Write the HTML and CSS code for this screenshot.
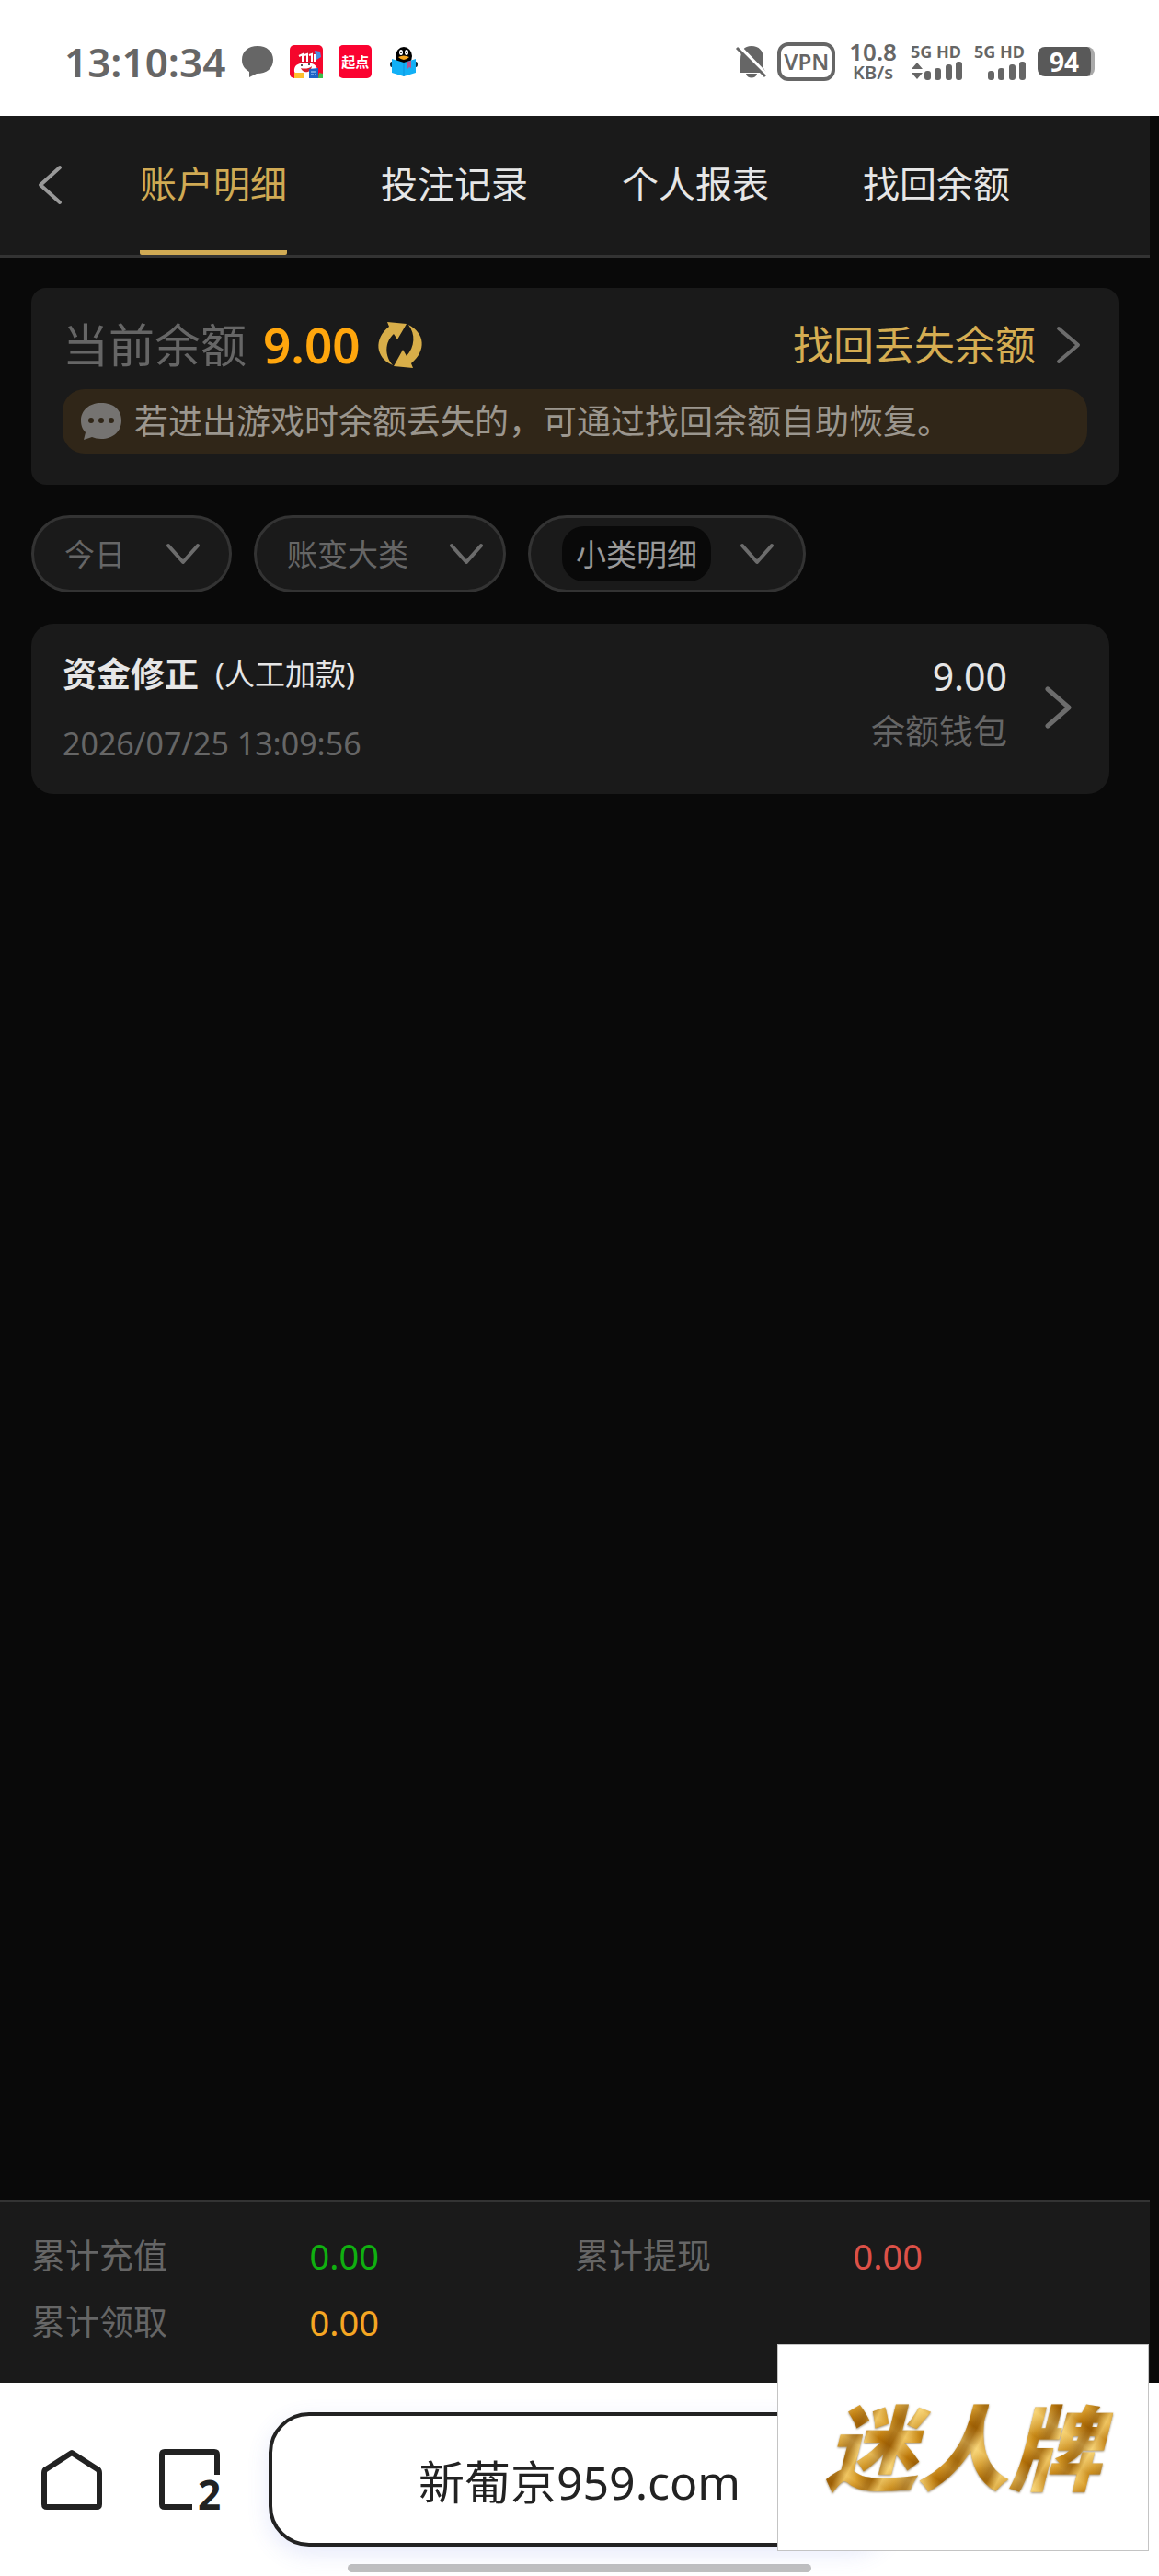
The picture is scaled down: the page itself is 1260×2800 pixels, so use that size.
FILE: index.html
```html
<!DOCTYPE html>
<html lang="zh-CN">
<head>
    <meta charset="UTF-8">
    <meta name="viewport" content="width=device-width, initial-scale=1.0">
    <title>账户明细</title>
    <link rel="stylesheet" href="styles.css">
</head>
<body>
    <!-- Phone status bar -->
    <div class="status-bar">
        <div class="status-left">
            <span class="clock">13:10:34</span>
            <svg width="36" height="36" viewBox="0 0 36 36"><path d="M18 1C8 1 1 7 1 16c0 6 3 10 8 13v6l8-4c11 0 18-6 18-15S28 1 18 1z" fill="#666"/></svg>
            <svg width="36" height="36" viewBox="0 0 36 36">
                <rect width="36" height="36" rx="5" fill="#f5062c"/>
                <path d="M10 9c1-5 15-6 17 0v10H10z" fill="#e0102c"/>
                <path d="M27 6l6 1 1 6-5 3z" fill="#4a8fe0"/>
                <path d="M10 12l4-2v8m2-7l3-1v8m2-7l3-1v8M27 10v8" stroke="#fff" stroke-width="2" fill="none"/>
                <path d="M5 29c-1-8 6-10 12-9 8-2 13 2 13 8l-3 8H9z" fill="#fff"/>
                <path d="M12 25c3 1 9 1 12-2-1 7-9 9-12 2z" fill="#d7222e"/>
                <circle cx="13" cy="22" r="1" fill="#222"/><circle cx="21" cy="21" r="1" fill="#222"/>
                <path d="M5 30h11v6H5z" fill="#ffc02e"/>
                <path d="M21 26l10-1v11H21z" fill="#1d62c5"/>
                <path d="M23 29h6m-6 3h3m1 0h2" stroke="#bfe0ff" stroke-width="1"/>
                <path d="M32 30l4 1v5h-5z" fill="#3bbf4a"/>
            </svg>
            <span class="app-qidian">起点</span>
            <svg width="36" height="36" viewBox="0 0 36 36">
                <ellipse cx="18" cy="12" rx="9" ry="10" fill="#000"/>
                <ellipse cx="5" cy="21" rx="2" ry="3" fill="#0a2a3c"/><ellipse cx="31" cy="21" rx="2" ry="3" fill="#0a2a3c"/>
                <ellipse cx="15" cy="8" rx="2" ry="3" fill="#fff"/><ellipse cx="21" cy="8" rx="2" ry="3" fill="#fff"/>
                <circle cx="15" cy="8" r="1"/><circle cx="21" cy="8" r="1"/>
                <path d="M12 13q6-3 12 0-6 6-12 0z" fill="#f6a51b"/>
                <path d="M5 15l13 4 13-4v15l-13 4-13-4z" fill="#12b0f6"/>
                <path d="M18 19v15" stroke="#0c93dc" stroke-width="1"/>
                <path d="M22 18l4-1v8l-2-1-2 2z" fill="#b7548c"/>
            </svg>
        </div>
        <div class="status-right">
            <svg width="34" height="38" viewBox="0 0 34 38">
                <path d="M5 31V17C5 7 9 2 17 2s13 5 13 14v10l3 5zM11 32h12c-1 6-11 6-12 0z" fill="#666"/>
                <path d="M3 2l32 33" stroke="#fff" stroke-width="4"/>
                <path d="M1 4l31 31" stroke="#666" stroke-width="3"/>
            </svg>
            <span class="vpn">VPN</span>
            <span class="speed"><b>10.8</b><small>KB/s</small></span>
            <span class="signal">
                <span>5G HD</span>
                <svg width="58" height="20" viewBox="0 0 58 20" fill="#666">
                    <path d="M1 8l6-7 6 7zM1 12l6 7 6-7z"/>
                    <rect x="15" y="10" width="7" height="10" rx="3"/><rect x="26" y="7" width="7" height="13" rx="3"/>
                    <rect x="38" y="3" width="7" height="17" rx="3"/><rect x="49" y="0" width="7" height="20" rx="3"/>
                </svg>
            </span>
            <span class="signal">
                <span>5G HD</span>
                <svg width="58" height="20" viewBox="0 0 58 20" fill="#666">
                    <rect x="15" y="10" width="7" height="10" rx="3"/><rect x="26" y="7" width="7" height="13" rx="3"/>
                    <rect x="38" y="3" width="7" height="17" rx="3"/><rect x="49" y="0" width="7" height="20" rx="3"/>
                </svg>
            </span>
            <span class="battery">94</span>
        </div>
    </div>

    <div class="app">
        <header class="header">
            <button class="icon-btn back" aria-label="返回">
                <svg width="28" height="44" viewBox="0 0 28 44"><path d="M25 2L4 21l21 19" class="line"/></svg>
            </button>
            <nav class="tabs">
                <a href="#" class="tab active">账户明细</a>
                <a href="#" class="tab">投注记录</a>
                <a href="#" class="tab">个人报表</a>
                <a href="#" class="tab">找回余额</a>
            </nav>
        </header>

        <main class="main">
            <!-- Balance -->
            <section class="balance-card">
                <div class="balance-row">
                    <span class="balance-label">当前余额</span>
                    <span class="balance-value">9.00</span>
                    <button class="icon-btn" aria-label="刷新">
                        <svg width="50" height="52" viewBox="0 0 50 52" fill="#d8ae49">
                            <path d="M11 1L32 3 22 20 18 14C8 23 8 38 17 48-2 40-4 19 13 6z"/>
                            <path d="M39 51L18 49 28 31 32 38C41 28 42 14 34 4 52 13 54 32 37 46z"/>
                        </svg>
                    </button>
                    <a href="#" class="recover">找回丢失余额
                        <svg width="28" height="42" viewBox="0 0 28 42"><path d="M3 3l21 18L3 39" class="line grey"/></svg>
                    </a>
                </div>
                <div class="notice">
                    <svg width="44" height="40" viewBox="0 0 44 40">
                        <path d="M22 0C9 0 0 8 0 19c0 6 2 10 5 13L3 40l9-3c3 1 6 2 10 2 13 0 22-8 22-20S35 0 22 0z" fill="#757371"/>
                        <circle cx="11" cy="19" r="3" fill="#302618"/><circle cx="22" cy="19" r="3" fill="#302618"/><circle cx="33" cy="19" r="3" fill="#302618"/>
                    </svg>
                    <span>若进出游戏时余额丢失的，可通过找回余额自助恢复。</span>
                </div>
            </section>

            <!-- Filters -->
            <div class="filters">
                <label class="filter">
                    <select aria-label="日期"><option>今日</option></select>
                    <svg width="36" height="24" viewBox="0 0 36 24"><path d="M2 3l16 18L34 3" class="line grey"/></svg>
                </label>
                <label class="filter filter-type">
                    <select aria-label="账变大类"><option>账变大类</option></select>
                    <svg width="36" height="24" viewBox="0 0 36 24"><path d="M2 3l16 18L34 3" class="line grey"/></svg>
                </label>
                <label class="filter filter-detail">
                    <select class="dark" aria-label="小类明细"><option>小类明细</option></select>
                    <svg width="36" height="24" viewBox="0 0 36 24"><path d="M2 3l16 18L34 3" class="line grey"/></svg>
                </label>
            </div>

            <!-- Records -->
            <a href="#" class="record">
                <div class="record-info">
                    <div class="record-title"><strong>资金修正</strong><span>(人工加款)</span></div>
                    <time class="record-time">2026/07/25 13:09:56</time>
                </div>
                <div class="record-amount">
                    <span class="amount">9.00</span>
                    <span class="wallet">余额钱包</span>
                </div>
                <svg width="32" height="46" viewBox="0 0 32 46"><path d="M4 3l23 20L4 43" class="line thick grey"/></svg>
            </a>
        </main>

        <footer class="totals">
            <div class="total"><span>累计充值</span><span class="green">0.00</span></div>
            <div class="total"><span>累计提现</span><span class="red">0.00</span></div>
            <div class="total"><span>累计领取</span><span class="orange">0.00</span></div>
        </footer>
    </div>

    <!-- Browser toolbar -->
    <div class="browser">
        <div class="browser-bar">
            <button class="icon-btn" aria-label="主页">
                <svg width="68" height="68" viewBox="0 0 68 68"><path d="M34 5L6 23q-2 1-2 4v34q0 3 3 3h54q3 0 3-3V27q0-3-2-4z" class="outline"/></svg>
            </button>
            <button class="icon-btn" aria-label="标签页">
                <svg width="68" height="68" viewBox="0 0 68 68">
                    <path d="M37 64H7q-3 0-3-3V7q0-3 3-3h54q3 0 3 3v22" class="outline"/>
                    <text x="43" y="67" class="tab-count">2</text>
                </svg>
            </button>
            <button class="address">新葡京959.com</button>
        </div>
        <div class="home-indicator"></div>
        <div class="float-ad"><span>迷人牌</span></div>
    </div>
</body>
</html>
```
FILE: styles.css
```css
* {
    margin: 0;
    padding: 0;
    box-sizing: border-box;
}

body {
    display: flex;
    flex-direction: column;
    min-height: 100vh;
    background: #090909;
    font-family: "Noto Sans", "Noto Sans CJK SC", sans-serif;
    color: #e6e6e6;
}

a {
    color: inherit;
    text-decoration: none;
}

svg {
    display: block;
    flex-shrink: 0;
    overflow: visible;
}

button, select {
    font-family: inherit;
    border: none;
    cursor: pointer;
}

.icon-btn {
    background: none;
}

.line {
    fill: none;
    stroke: #999;
    stroke-width: 4;
    stroke-linecap: round;
    stroke-linejoin: round;
}

.line.thick {
    stroke-width: 5;
}

.line.grey {
    stroke: #6c6c6c;
}

/* status bar */
.status-bar {
    display: flex;
    align-items: center;
    justify-content: space-between;
    height: 126px;
    padding: 8px 70px 0;
    background: #fff;
    color: #666;
}

.status-left {
    display: flex;
    align-items: center;
    gap: 17px;
}

.clock {
    font-size: 44px;
    font-weight: 600;
    line-height: 48px;
}

.app-qidian {
    width: 36px;
    height: 36px;
    border-radius: 5px;
    background: #fb0230;
    color: #fff;
    font-size: 15px;
    font-weight: 700;
    line-height: 36px;
    text-align: center;
}

.status-right {
    display: flex;
    align-items: center;
    gap: 11px;
}

.vpn {
    padding: 0 3px;
    border: 4px solid #666;
    border-radius: 12px;
    font-size: 24px;
    font-weight: 600;
    line-height: 34px;
}

.speed {
    display: flex;
    flex-direction: column;
    align-items: center;
    margin: 0 4px;
    font-size: 26px;
    line-height: 24px;
}

.speed b {
    font-weight: 600;
}

.speed small {
    font-size: 20px;
    font-weight: 600;
    line-height: 22px;
}

.signal {
    display: flex;
    flex-direction: column;
    gap: 2px;
    font-size: 18px;
    font-weight: 700;
    line-height: 18px;
    white-space: nowrap;
}

.battery {
    width: 62px;
    border-right: 4px solid #aaa;
    border-radius: 8px;
    background: #595959;
    color: #fff;
    font-size: 28px;
    font-weight: 700;
    line-height: 32px;
    text-align: center;
}

/* page */
.app {
    flex: 1;
    display: flex;
    flex-direction: column;
    padding-right: 10px;
}

.header {
    display: flex;
    align-items: stretch;
    height: 154px;
    padding-left: 40px;
    background: #1a1a1a;
    border-bottom: 3px solid #333;
}

.tabs {
    display: flex;
    gap: 102px;
    margin-left: 84px;
}

.tab {
    padding-top: 44px;
    border-bottom: 5px solid transparent;
    font-size: 40px;
    line-height: 60px;
}

.tab.active {
    color: #d0aa54;
    border-color: #d0aa54;
    border-radius: 2px;
}

.main {
    flex: 1;
    padding: 33px 34px;
}

.balance-card {
    padding: 32px 34px 34px;
    border-radius: 16px;
    background: #1a1a1a;
}

.balance-row {
    display: flex;
    align-items: center;
    height: 60px;
    margin-bottom: 18px;
}

.balance-label {
    font-size: 50px;
    line-height: 60px;
    color: #666;
}

.balance-value {
    margin: 0 18px;
    font-size: 53px;
    font-weight: 600;
    line-height: 60px;
    color: #ffa60d;
}

.recover {
    display: flex;
    align-items: center;
    gap: 22px;
    margin-left: auto;
    padding-right: 6px;
    font-size: 44px;
    line-height: 60px;
    color: #d5ad52;
}

.notice {
    display: flex;
    align-items: center;
    gap: 14px;
    height: 70px;
    padding: 0 20px;
    border-radius: 24px;
    background: #302618;
    font-size: 37px;
    line-height: 54px;
    color: #9b968e;
}

.filters {
    display: flex;
    gap: 24px;
    margin: 33px 0 34px;
}

.filter {
    display: flex;
    align-items: center;
    gap: 37px;
    height: 84px;
    padding: 0 32px 0 25px;
    border: 3px solid #333;
    border-radius: 42px;
    background: #1a1a1a;
}

.filter-type {
    padding-right: 22px;
}

.filter-detail {
    gap: 32px;
    padding-left: 34px;
}

.filter select {
    appearance: none;
    height: 60px;
    padding: 0 8px;
    background: transparent;
    color: #666;
    font-size: 33px;
}

.filter select.dark {
    padding: 0 15px;
    border-radius: 24px;
    background: #090909;
    color: #999;
}

.record {
    display: flex;
    align-items: center;
    margin-right: 10px;
    padding: 25px 39px 28px 34px;
    border-radius: 24px;
    background: #1a1a1a;
}

.record-info {
    flex: 1;
}

.record-title {
    display: flex;
    align-items: center;
    gap: 18px;
    margin-bottom: 18px;
    font-size: 33px;
    line-height: 60px;
}

.record-title strong {
    font-size: 37px;
}

.record-time {
    display: block;
    font-size: 34px;
    line-height: 54px;
    color: #666;
}

.record-amount {
    display: flex;
    flex-direction: column;
    align-items: flex-end;
    margin-right: 40px;
    padding-bottom: 8px;
}

.amount {
    font-size: 41px;
    line-height: 60px;
}

.wallet {
    font-size: 37px;
    line-height: 60px;
    color: #666;
}

.totals {
    display: grid;
    grid-template-columns: 1fr 1fr;
    gap: 18px 0;
    padding: 31px 34px 39px;
    border-top: 3px solid #333;
    background: #1a1a1a;
    font-size: 37px;
    line-height: 54px;
    color: #666;
}

.total {
    display: flex;
    gap: 14px;
}

.total span {
    flex: 1;
}

.total .green,
.total .red,
.total .orange {
    font-size: 38px;
}

.total .green {
    color: #10b010;
}

.total .red {
    color: #dc5148;
}

.total .orange {
    color: #f5a623;
}

/* browser toolbar */
.browser {
    position: relative;
    height: 210px;
    padding: 32px 44px 0;
    background: #fff;
}

.browser-bar {
    display: flex;
    align-items: center;
    gap: 60px;
}

.outline {
    fill: none;
    stroke: #222;
    stroke-width: 6;
    stroke-linejoin: round;
}

.tab-count {
    font-size: 44px;
    font-weight: 700;
    fill: #222;
}

.address {
    flex: 1;
    height: 146px;
    margin-left: -8px;
    margin-right: 248px;
    border: 4px solid #222;
    border-radius: 44px;
    background: #fff;
    box-shadow: 0 8px 24px rgba(80, 100, 220, 0.14);
    font-size: 50px;
    color: #222;
}

.home-indicator {
    width: 43%;
    height: 9px;
    margin: 19px auto 0;
    border-radius: 5px;
    background: #c0c0c0;
}

/* sits over the totals and the toolbar */
.float-ad {
    position: absolute;
    right: 11px;
    bottom: 27px;
    width: 404px;
    height: 225px;
    border: 1px solid #c4c4c4;
    background: #fff;
    text-align: center;
    font-size: 100px;
    font-weight: 900;
    font-style: italic;
    line-height: 223px;
}

.float-ad span {
    padding: 0 24px;
    background:
        repeating-linear-gradient(118deg, rgba(120, 66, 0, 0.45) 0 4px, rgba(255, 226, 140, 0.5) 14px, rgba(190, 120, 10, 0.2) 26px, rgba(120, 66, 0, 0.45) 37px),
        repeating-linear-gradient(35deg, #c88a18 0, #f3cc6a 22px, #b97508 41px, #e3ac3c 58px, #c88a18 70px);
    -webkit-background-clip: text;
    background-clip: text;
    color: transparent;
    filter: drop-shadow(0 1px 1px rgba(90, 60, 10, 0.6));
}
```
